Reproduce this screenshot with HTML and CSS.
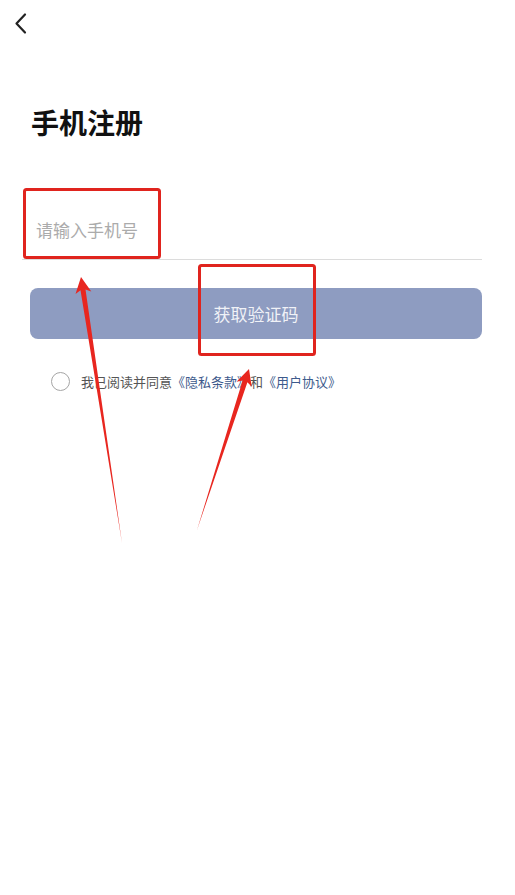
FILE: index.html
```html
<!DOCTYPE html>
<html lang="zh-CN">
<head>
<meta charset="utf-8">
<title>手机注册</title>
<link rel="stylesheet" href="styles.css">
</head>
<body>
<div class="page">
  <div class="topbar">
    <svg class="back" width="16" height="24" viewBox="0 0 16 24"><path d="M12 2.5 L3.5 11.5 L12 20.5" fill="none" stroke="#222" stroke-width="2.2" stroke-linecap="round" stroke-linejoin="round"/></svg>
  </div>
  <h1 class="title">手机注册</h1>
  <div class="field"><span class="placeholder">请输入手机号</span></div>
  <div class="btn">获取验证码</div>
  <div class="agree">
    <span class="circle"></span>
    <span class="agree-text">我已阅读并同意<span class="link">《隐私条款》</span>和<span class="link">《用户协议》</span></span>
  </div>

  <svg class="marks" width="515" height="895" viewBox="0 0 515 895">
    <rect x="24.5" y="189.5" width="135" height="68" rx="2" fill="none" stroke="#e0241e" stroke-width="3"/>
    <rect x="199.5" y="265.5" width="115" height="89" rx="2" fill="none" stroke="#e0241e" stroke-width="3"/>
    <polygon points="81,277 91.3,291.6 85.5,289.4 122,543 80.5,290.2 75.5,294" fill="#e8261f"/>
    <polygon points="249,369 251.7,386.7 247.4,382.2 197,530 242.6,380.6 236.5,381.7" fill="#e8261f"/>
  </svg>
</div>
</body>
</html>
```
FILE: styles.css
```css
html, body {
  margin: 0;
  padding: 0;
  background: #ffffff;
}
body {
  font-family: "Noto Sans CJK SC", "Noto Sans", sans-serif;
  color: #1a1a1a;
}
.page {
  position: relative;
  width: 515px;
  height: 895px;
  overflow: hidden;
}
.topbar {
  height: 48px;
  display: flex;
  align-items: center;
  padding-left: 13px;
}
.back {
  display: block;
}
.title {
  margin: 56px 0 0 31px;
  font-size: 28px;
  line-height: 36px;
  font-weight: 700;
  color: #111;
}
.field {
  box-sizing: border-box;
  margin: 60px 33px 0 22px;
  height: 60px;
  border-bottom: 1px solid #dcdcdc;
  display: flex;
  align-items: center;
  padding-left: 14px;
}
.placeholder {
  font-size: 17px;
  color: #ababab;
}
.btn {
  margin: 28px 0 0 30px;
  width: 452px;
  height: 51px;
  border-radius: 8px;
  background: #8e9cc1;
  color: rgba(255, 255, 255, 0.88);
  font-size: 17px;
  display: flex;
  align-items: center;
  justify-content: center;
}
.agree {
  margin: 31px 0 0 51px;
  height: 22px;
  display: flex;
  align-items: center;
  gap: 11px;
}
.circle {
  box-sizing: border-box;
  width: 19px;
  height: 19px;
  border: 1.5px solid #a5a5a5;
  border-radius: 50%;
}
.agree-text {
  font-size: 13px;
  color: #555;
}
.link {
  color: #3d5a8c;
}
.marks {
  position: absolute;
  left: 0;
  top: 0;
  pointer-events: none;
}
```
